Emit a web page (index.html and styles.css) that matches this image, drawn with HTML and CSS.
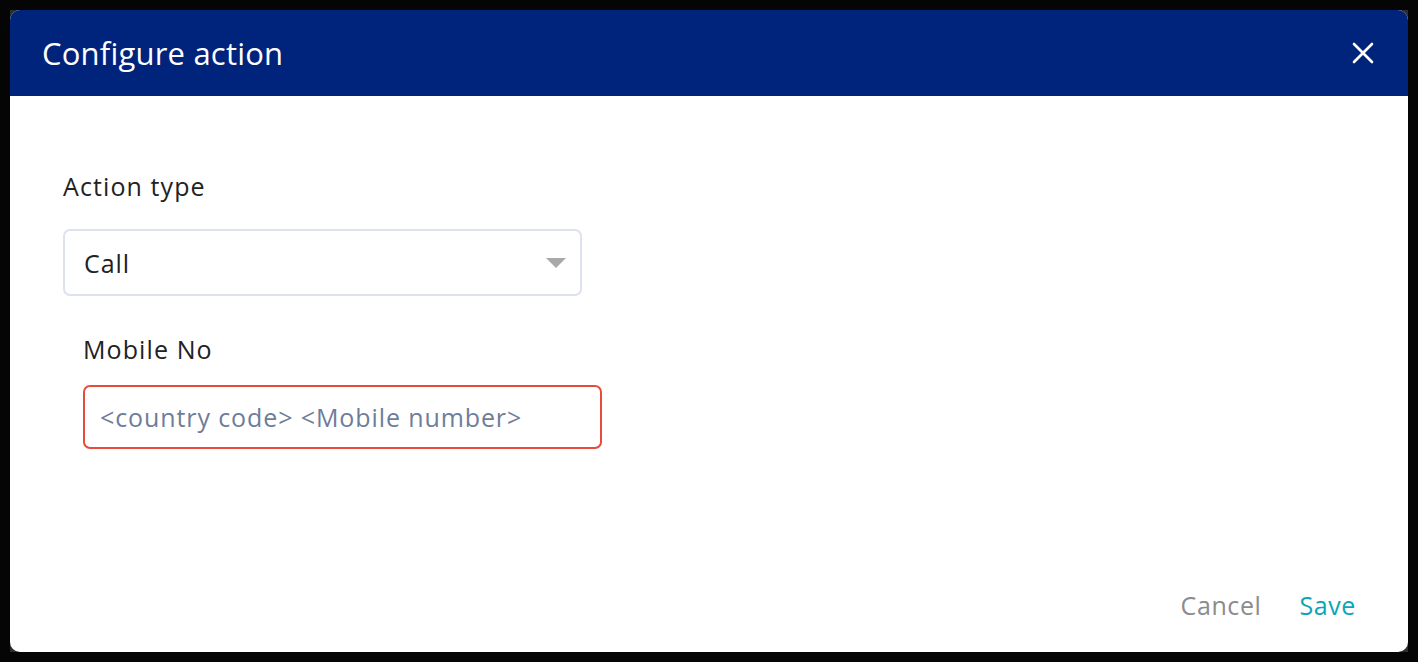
FILE: index.html
```html
<!DOCTYPE html>
<html lang="en">

<head>
  <meta charset="UTF-8">
  <meta name="viewport" content="width=device-width, initial-scale=1.0">
  <title>Configure action</title>
  <link rel="stylesheet" href="styles.css">
</head>

<body>

  <div class="backdrop">
    <div class="dialog">

      <!-- 头部 -->
      <div class="dialog-head">
        <h1>Configure action</h1>
        <span class="close">
          <svg width="22" height="22" viewBox="0 0 22 22">
            <path d="M2 2 L20 20 M20 2 L2 20" stroke="#fff" stroke-width="2.6" stroke-linecap="round" />
          </svg>
        </span>
      </div>

      <!-- 内容 -->
      <div class="dialog-body">
        <div class="field">
          <label>Action type</label>
          <div class="select">
            <span>Call</span>
            <i class="caret"></i>
          </div>
        </div>

        <div class="field sub">
          <label>Mobile No</label>
          <div class="input error">&lt;country code&gt; &lt;Mobile number&gt;</div>
        </div>
      </div>

      <!-- 底部按钮 -->
      <div class="dialog-foot">
        <span class="btn cancel">Cancel</span>
        <span class="btn save">Save</span>
      </div>

    </div>
  </div>

</body>

</html>
```

FILE: styles.css
```css
* {
  margin: 0;
  padding: 0;
  box-sizing: border-box;
}

body {
  width: 1418px;
  height: 662px;
  background-color: #050505;
  font-family: "Open Sans", Lato, sans-serif;
  padding: 10px;
}

/* 弹框后面的灰色底 */
.backdrop {
  width: 1398px;
  height: 642px;
  background-color: #2e2e2e;
}

.dialog {
  width: 100%;
  height: 100%;
  background-color: #fff;
  border-radius: 10px;
  overflow: hidden;
  display: flex;
  flex-direction: column;
}

.dialog-head {
  height: 86px;
  background-color: #00247b;
  display: flex;
  align-items: center;
  justify-content: space-between;
  padding: 0 34px 0 32px;
}

.dialog-head h1 {
  font-weight: 400;
  font-size: 31px;
  letter-spacing: 0.2px;
  color: #fff;
}

.close {
  display: flex;
  cursor: pointer;
}

.dialog-body {
  flex: 1;
  padding: 74px 53px 0;
}

.field label {
  display: block;
  font-size: 25px;
  letter-spacing: 1.1px;
  color: #222;
  line-height: 32px;
}

.select {
  margin-top: 27px;
  width: 519px;
  height: 67px;
  border: 2px solid #dde2ee;
  border-radius: 7px;
  display: flex;
  align-items: center;
  justify-content: space-between;
  padding: 0 14px 0 19px;
  font-size: 25px;
  letter-spacing: 0.9px;
  color: #222;
}

/* 下拉小三角 */
.caret {
  width: 0;
  height: 0;
  border-left: 10px solid transparent;
  border-right: 10px solid transparent;
  border-top: 10px solid #a9a9a9;
}

.field.sub {
  margin-top: 37px;
  padding-left: 20px;
}

.input {
  margin-top: 20px;
  width: 519px;
  height: 64px;
  border: 2px solid #ccd;
  border-radius: 7px;
  display: flex;
  align-items: center;
  padding: 0 15px;
  font-size: 25px;
  letter-spacing: 0.9px;
  color: #6e7d99;
}

.input.error {
  border-color: #e84a3b;
}

.dialog-foot {
  display: flex;
  justify-content: flex-end;
  gap: 38px;
  padding: 0 52px 30px;
}

.btn {
  font-size: 25px;
  letter-spacing: 0.6px;
  cursor: pointer;
}

.cancel {
  color: #8b8b8b;
}

.save {
  color: #0aa5b8;
}
```
